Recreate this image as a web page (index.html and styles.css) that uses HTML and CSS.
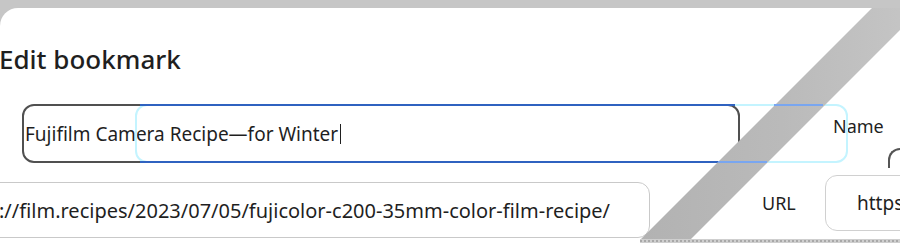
FILE: index.html
```html
<!DOCTYPE html>
<html lang="en">
<head>
<meta charset="utf-8">
<title>Edit bookmark</title>
<link rel="stylesheet" href="styles.css">
</head>
<body>
<div class="screen">
  <div class="dialog">
    <h1 class="title">Edit bookmark</h1>
    <div class="row row-name">
      <div class="field name-field">
        <span class="value">Fujifilm Camera Recipe—for Winter</span><span class="caret"></span>
        <span class="focus-ring"></span>
        <span class="focus-line"></span>
      </div>
      <span class="label name-label">Name</span>
      <span class="ghost-corner"></span>
    </div>
    <div class="row row-url">
      <div class="field url-field">
        <span class="value">://film.recipes/2023/07/05/fujicolor-c200-35mm-color-film-recipe/</span>
      </div>
      <span class="label url-label">URL</span>
      <div class="field https-field">
        <span class="value">https</span>
      </div>
    </div>
  </div>
  <svg class="tear" width="900" height="243" viewBox="0 0 900 243" aria-hidden="true">
    <defs>
      <linearGradient id="bandGrad" x1="0" y1="0" x2="1" y2="0">
        <stop offset="0" stop-color="#b2b2b2"/>
        <stop offset="0.5" stop-color="#bababa"/>
        <stop offset="1" stop-color="#c6c6c6"/>
      </linearGradient>
      <pattern id="dots" width="4" height="4" patternUnits="userSpaceOnUse">
        <rect width="4" height="4" fill="#cfcfcf"/>
        <rect width="2" height="2" fill="#a8a8a8"/>
      </pattern>
    </defs>
    <polygon points="872,8 922,8 691,239 641,239" fill="url(#bandGrad)"/>
    <line x1="774" y1="105" x2="823" y2="105" stroke="#79a6f0" stroke-width="2"/>
    <line x1="718" y1="162" x2="767" y2="162" stroke="#79a6f0" stroke-width="2"/>
    <rect x="640" y="239" width="260" height="4" fill="url(#dots)"/>
  </svg>
</div>
</body>
</html>
```
FILE: styles.css
```css
html, body {
  margin: 0;
  padding: 0;
}
body {
  background: #c6c6c6;
  font-family: "Noto Sans", "Open Sans", "Liberation Sans", sans-serif;
  color: #1f1f1f;
}
.screen {
  position: relative;
  width: 900px;
  height: 243px;
  overflow: hidden;
  padding-top: 8px;
  box-sizing: border-box;
}
.dialog {
  background: #ffffff;
  height: 235px;
  border-radius: 18px 12px 0 0;
  overflow: hidden;
}
.title {
  margin: 0 0 0 -1px;
  padding-top: 35px;
  font-size: 26px;
  line-height: 32px;
  font-weight: 500;
  color: #1f1f1f;
}
.row {
  display: flex;
  align-items: flex-start;
}
.row-name {
  margin-top: 29px;
}
.field {
  position: relative;
  flex-shrink: 0;
  box-sizing: border-box;
  display: flex;
  align-items: center;
  font-size: 19px;
  color: #1f1f1f;
  white-space: nowrap;
}
.name-field {
  margin-left: 22px;
  width: 718px;
  height: 59px;
  border: 2px solid #505050;
  border-radius: 12px;
  padding-left: 1px;
}
.caret {
  display: inline-block;
  width: 0;
  height: 20px;
  border-left: 1.5px solid #1f1f1f;
  margin-left: 2px;
}
.focus-ring {
  position: absolute;
  left: 111px;
  top: -2px;
  width: 713px;
  height: 59px;
  box-sizing: border-box;
  border: 2px solid #c4f4ff;
  border-radius: 12px;
}
.focus-line {
  position: absolute;
  left: 116px;
  top: -2px;
  width: 595px;
  height: 59px;
  box-sizing: border-box;
  border-top: 2px solid #2f62c0;
  border-bottom: 2px solid #2f62c0;
}
.label {
  flex-shrink: 0;
  line-height: 20px;
  color: #1f1f1f;
}
.name-label {
  margin-left: 93px;
  margin-top: 12px;
  font-size: 18px;
  width: 55px;
}
.ghost-corner {
  flex-shrink: 0;
  margin-left: 0;
  margin-top: 44px;
  width: 24px;
  height: 20px;
  box-sizing: border-box;
  border-top: 2px solid #555555;
  border-left: 2px solid #555555;
  border-top-left-radius: 12px;
}
.row-url {
  margin-top: 7px;
}
.url-field {
  margin-top: 7px;
  margin-left: -14px;
  width: 664px;
  height: 56px;
  border: 1px solid #c9c9c9;
  border-radius: 12px;
  padding-left: 12px;
  font-size: 20px;
}
.url-label {
  margin-left: 112px;
  margin-top: 18px;
  font-size: 18px;
  width: 63px;
}
.https-field {
  width: 110px;
  height: 56px;
  border: 1px solid #d0d0d0;
  border-radius: 12px;
  padding-left: 31px;
}
.tear {
  position: absolute;
  left: 0;
  top: 0;
  pointer-events: none;
}
```
